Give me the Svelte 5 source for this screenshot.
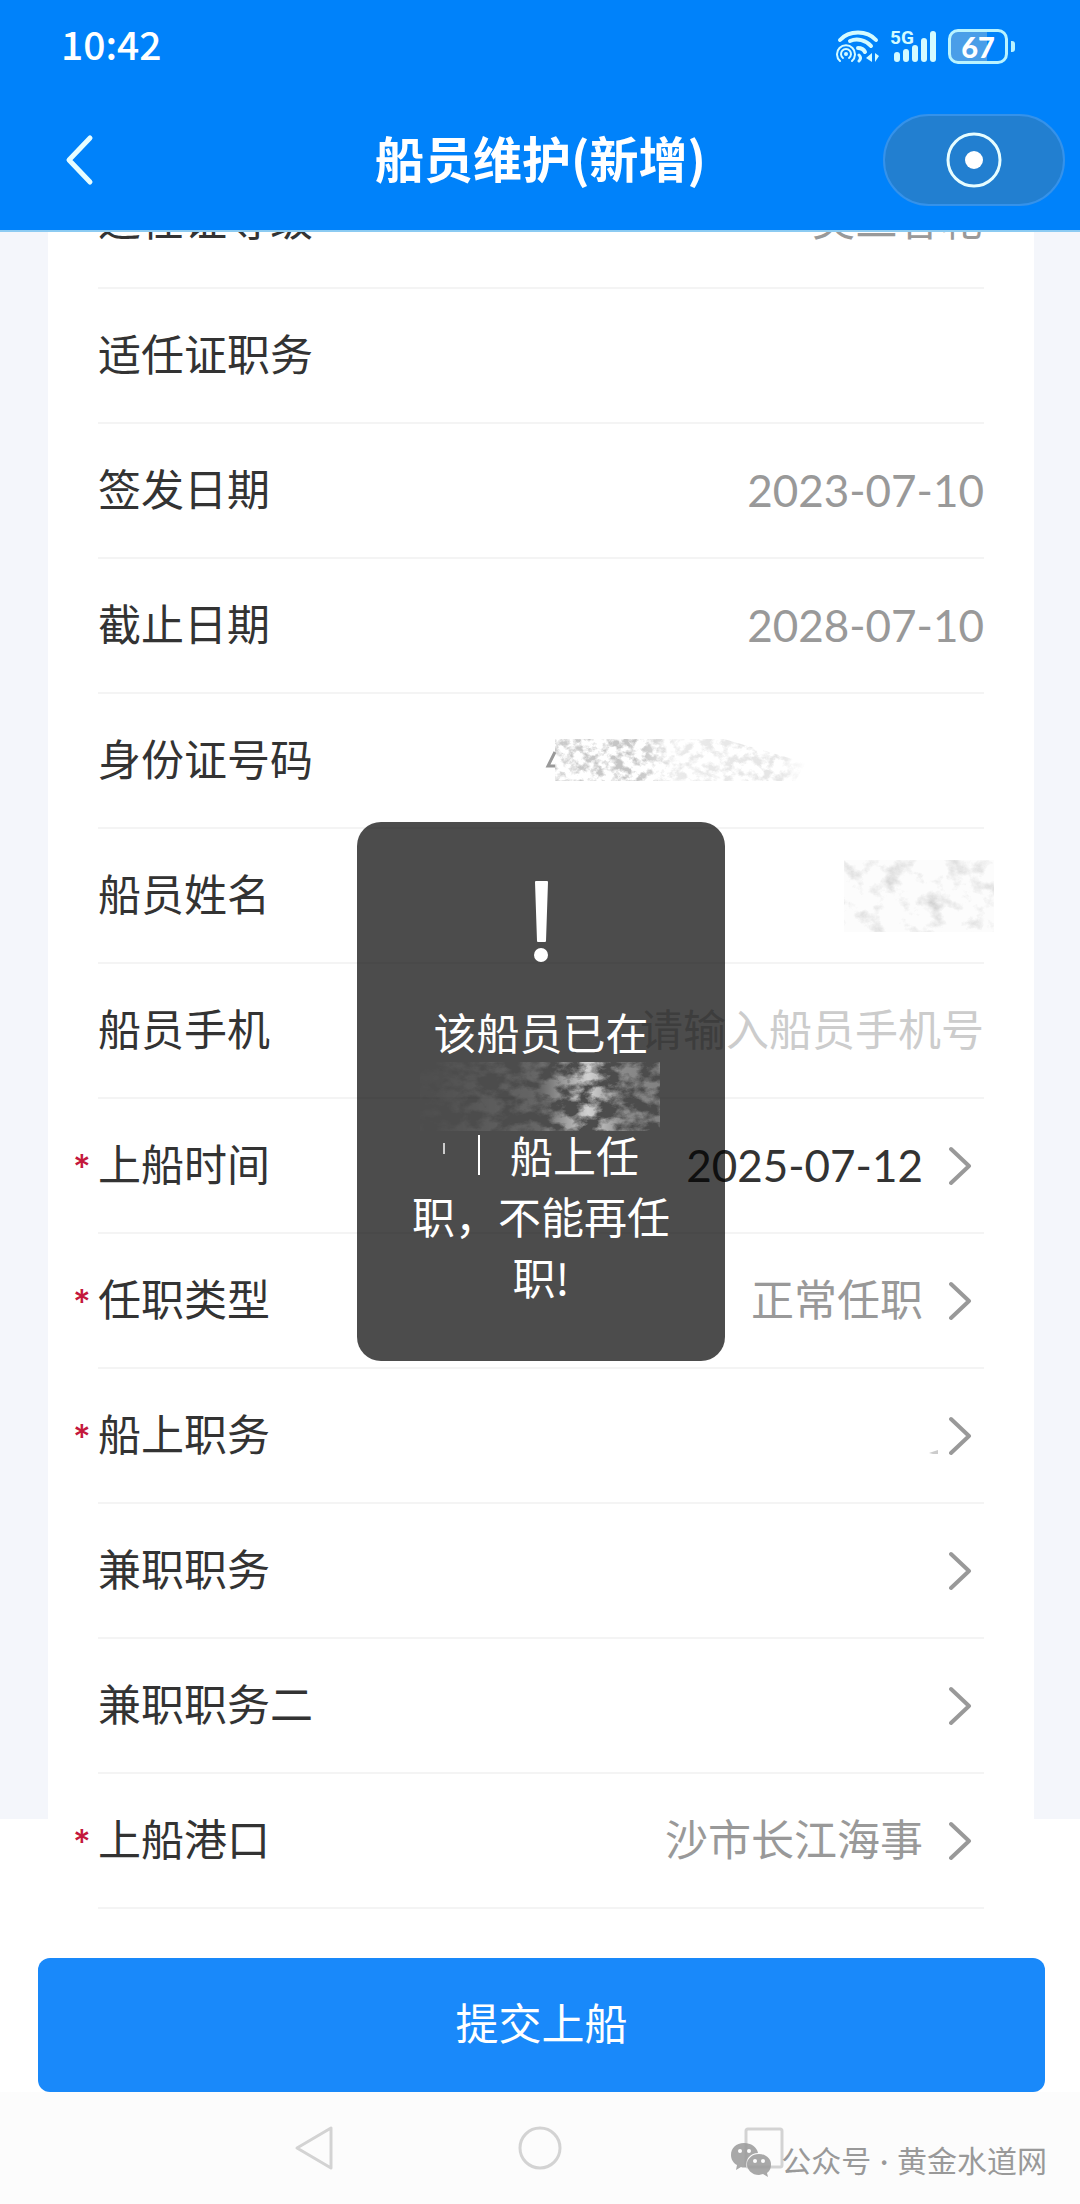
<script>
    let phone = '';

    const rows = [
        { id: 'level', label: '适任证等级', value: '类三客轮' },
        { id: 'duty', label: '适任证职务', value: '' },
        { id: 'issued', label: '签发日期', value: '2023-07-10', numeric: true },
        { id: 'expires', label: '截止日期', value: '2028-07-10', numeric: true },
        { id: 'idcard', label: '身份证号码', smudge: 'id' },
        { id: 'name', label: '船员姓名', smudge: 'name' },
        { id: 'phone', label: '船员手机', input: true },
        { id: 'boarding', label: '上船时间', value: '2025-07-12', numeric: true, dark: true, picker: true, required: true },
        { id: 'type', label: '任职类型', value: '正常任职', picker: true, required: true },
        { id: 'post', label: '船上职务', value: '', smudge: 'post', picker: true, required: true },
        { id: 'second', label: '兼职职务', value: '', picker: true },
        { id: 'third', label: '兼职职务二', value: '', picker: true },
        { id: 'port', label: '上船港口', value: '沙市长江海事', picker: true, required: true }
    ];

    const bars = [10, 13, 17, 24, 31];
</script>

<div class="page">
    <header>
        <div class="status">
            <span class="clock">10:42</span>
            <div class="indicators">
                <svg class="wifi" viewBox="0 0 44 34" width="44" height="34" fill="none" stroke="#d4fbff" stroke-linecap="round">
                    <path d="M4 11C13 1 31 1 40 11" stroke-width="4" />
                    <path d="M14 12C21 9 30 11 35 17" stroke-width="4" />
                    <path d="M22 19Q27 19 29 23" stroke-width="4" />
                    <path d="M4 32A9 9 0 1 1 16 32" stroke-width="2" />
                    <path d="M7 29A5 5 0 1 1 13 29" stroke-width="2" />
                    <circle cx="10" cy="25" r="2" fill="#d4fbff" stroke="none" />
                    <path d="M23 26Q26 29 23 32" stroke-width="3" />
                    <path d="M36 24V33L30 29ZM39 24V33L43 27Z" fill="#d4fbff" stroke="none" />
                </svg>
                <div class="signal">
                    <span class="net">5G</span>
                    <div class="bars">
                        {#each bars as h}
                            <i style="height: {h}px"></i>
                        {/each}
                    </div>
                </div>
                <div class="battery"><span>67</span></div>
            </div>
        </div>
        <nav class="titlebar">
            <button class="back" aria-label="返回">
                <svg viewBox="0 0 32 52" width="32" height="52" fill="none" stroke="#e6fdff" stroke-width="5" stroke-linecap="round" stroke-linejoin="round">
                    <path d="M28 4L7 26L28 48" />
                </svg>
            </button>
            <h1>船员维护(新增)</h1>
            <button class="capsule" aria-label="关闭">
                <svg viewBox="0 0 56 56" width="56" height="56">
                    <circle cx="28" cy="28" r="26" fill="none" stroke="#e6fdff" stroke-width="3" />
                    <circle cx="28" cy="28" r="9" fill="#fff" />
                </svg>
            </button>
        </nav>
    </header>

    <form on:submit|preventDefault>
        <div class="sheet">
            <div class="card">
                {#each rows as row}
                    <div class="row">
                        <span class="star">{row.required ? '*' : ''}</span>
                        <div class="field">
                            <label for={row.id}>{row.label}</label>
                            {#if row.smudge === 'id'}
                                <svg class="smudge-id" viewBox="0 0 440 44" width="440" height="44">
                                    <path d="M11 13L4 27H11" fill="none" stroke="#999" stroke-width="3" />
                                    <rect x="11" y="0" width="330" height="42" filter="url(#grain)" mask="url(#fade-id)" />
                                </svg>
                            {:else if row.smudge === 'name'}
                                <svg class="smudge-name" viewBox="0 0 150 72" width="150" height="72">
                                    <rect width="150" height="72" fill="#fcfcfc" />
                                    <rect width="150" height="72" filter="url(#faint)" />
                                </svg>
                            {/if}
                            {#if row.input}
                                <input id={row.id} type="tel" placeholder="请输入船员手机号" bind:value={phone}>
                            {:else if row.picker}
                                <button type="button" class="pick" class:dark={row.dark} id={row.id}>
                                    <span class="value" class:numeric={row.numeric}>{row.value}</span>
                                    {#if row.smudge === 'post'}
                                        <svg class="speck" viewBox="0 0 12 40" width="12" height="40">
                                            <path d="M0 37L9 34V38H4Z" fill="#ccc" />
                                        </svg>
                                    {/if}
                                    <svg viewBox="0 0 24 40" width="24" height="40" fill="none" stroke="#999" stroke-width="4" stroke-linecap="round" stroke-linejoin="round">
                                        <path d="M2 3L20 20L2 37" />
                                    </svg>
                                </button>
                            {:else if !row.smudge}
                                <output id={row.id} class="value" class:numeric={row.numeric}>{row.value}</output>
                            {/if}
                        </div>
                    </div>
                {/each}
            </div>
        </div>
        <div class="submit">
            <button type="submit">提交上船</button>
        </div>
    </form>

    <footer>
        <button aria-label="后退">
            <svg viewBox="0 0 44 48" width="44" height="48" fill="none" stroke="#d3d3d3" stroke-width="3" stroke-linejoin="round">
                <path d="M37 4V44L3 24Z" />
            </svg>
        </button>
        <button aria-label="主页">
            <svg viewBox="0 0 44 48" width="44" height="48" fill="none" stroke="#d3d3d3" stroke-width="3">
                <circle cx="22" cy="24" r="20" />
            </svg>
        </button>
        <button aria-label="最近">
            <svg viewBox="0 0 44 48" width="44" height="48" fill="none" stroke="#d3d3d3" stroke-width="3">
                <rect x="4" y="5" width="36" height="38" rx="2" />
            </svg>
        </button>
        <div class="account">
            <svg viewBox="0 0 42 36" width="42" height="36">
                <path fill="#999" fill-opacity="0.85" d="M14 1C6 1 1 6 1 13C1 17 3 21 7 23L6 28L11 25Q14 26 16 25C15 17 21 11 28 11C27 5 21 1 14 1Z" />
                <path fill="#999" fill-opacity="0.85" d="M29 12C22 12 17 17 17 22C17 28 22 33 29 33L33 32L38 35L37 31C40 29 41 26 41 22C41 17 36 12 29 12Z" />
                <g fill="#fcfcfc">
                    <circle cx="10" cy="9" r="2" />
                    <circle cx="19" cy="9" r="2" />
                    <circle cx="25" cy="19" r="2" />
                    <circle cx="33" cy="19" r="2" />
                </g>
            </svg>
            <span>公众号</span>
            <span>·</span>
            <span>黄金水道网</span>
        </div>
    </footer>

    <div class="toast" role="alert">
        <svg class="mark" viewBox="0 0 20 84" width="20" height="84" fill="#fff">
            <path d="M4 2Q4 1 5 1H16Q17 1 17 2L15 61Q15 62 14 62H7Q6 62 6 61Z" />
            <circle cx="10" cy="75" r="7" />
        </svg>
        <p>该船员已在</p>
        <svg class="smudge-ship" viewBox="0 0 240 70" width="240" height="70">
            <rect width="240" height="69" fill="#fff" filter="url(#glow)" mask="url(#fade-ship)" />
        </svg>
        <p class="ship"><i class="tick"></i><i class="bar"></i><span>船上任</span></p>
        <p>职，不能再任<br>职!</p>
    </div>

    <svg class="defs" width="0" height="0" aria-hidden="true">
        <defs>
            <filter id="grain" x="0" y="0" width="1" height="1">
                <feTurbulence type="fractalNoise" baseFrequency="0.1 0.12" numOctaves="6" seed="7" />
                <feColorMatrix values="0 0 0 0 0.4  0 0 0 0 0.4  0 0 0 0 0.4  4 0 0 0 -1.7" />
                <feComposite in2="SourceGraphic" operator="in" />
            </filter>
            <filter id="faint" x="0" y="0" width="1" height="1">
                <feTurbulence type="fractalNoise" baseFrequency="0.05 0.06" numOctaves="6" seed="12" />
                <feColorMatrix values="0 0 0 0 0.5  0 0 0 0 0.5  0 0 0 0 0.5  1.5 0 0 0 -0.75" />
                <feComposite in2="SourceGraphic" operator="in" />
            </filter>
            <filter id="glow" x="0" y="0" width="1" height="1">
                <feTurbulence type="fractalNoise" baseFrequency="0.05 0.08" numOctaves="7" seed="9" />
                <feColorMatrix values="0 0 0 0 1  0 0 0 0 1  0 0 0 0 1  3.5 0 0 0 -1.3" />
                <feComposite in2="SourceGraphic" operator="in" />
            </filter>
            <linearGradient id="g-id">
                <stop offset="0" stop-color="#fff" stop-opacity="0.6" />
                <stop offset="0.35" stop-color="#fff" stop-opacity="0.7" />
                <stop offset="0.5" stop-color="#fff" stop-opacity="0.25" />
                <stop offset="0.9" stop-color="#fff" stop-opacity="0.3" />
                <stop offset="1" stop-color="#fff" stop-opacity="0" />
            </linearGradient>
            <linearGradient id="g-ship">
                <stop offset="0.05" stop-color="#fff" stop-opacity="0.02" />
                <stop offset="0.5" stop-color="#fff" stop-opacity="0.15" />
                <stop offset="0.7" stop-color="#fff" stop-opacity="0.75" />
                <stop offset="0.85" stop-color="#fff" stop-opacity="0.35" />
                <stop offset="1" stop-color="#fff" stop-opacity="0.3" />
            </linearGradient>
            <mask id="fade-id"><path d="M0 0H180L262 24L250 44H0Z" fill="url(#g-id)" /></mask>
            <mask id="fade-ship"><rect width="240" height="70" fill="url(#g-ship)" /></mask>
        </defs>
    </svg>
</div>

<style>
    :global(body) {
        margin: 0;
        background: #fff;
    }
    .page {
        position: relative;
        display: flex;
        flex-direction: column;
        min-height: 100vh;
        font-family: "Noto Sans CJK SC", sans-serif;
        font-size: 43px;
        line-height: 61px;
        color: #333;
    }
    button, input {
        font: inherit;
        color: inherit;
        background: none;
        border: 0;
        padding: 0;
        margin: 0;
    }
    svg {
        display: block;
        flex: none;
    }
    header {
        background: #0082fa;
        border-bottom: 2px solid #8ccbf2;
        color: #fff;
    }
    .status {
        display: flex;
        align-items: center;
        justify-content: space-between;
        height: 92px;
        padding: 0 72px 0 61px;
    }
    .clock {
        padding-bottom: 5px;
        font-size: 39px;
        font-weight: 500;
    }
    .indicators {
        display: flex;
        align-items: center;
        gap: 10px;
    }
    .signal {
        position: relative;
        width: 48px;
        height: 34px;
    }
    .net {
        position: absolute;
        left: 0;
        top: 0;
        font-family: Roboto, sans-serif;
        font-size: 19px;
        line-height: 17px;
        font-weight: 700;
        color: #d4fbff;
    }
    .bars {
        display: flex;
        align-items: flex-end;
        justify-content: flex-end;
        gap: 3px;
        height: 33px;
        padding-right: 2px;
    }
    .bars i {
        width: 6px;
        border-radius: 3px;
        background: #d4fbff;
    }
    .battery {
        position: relative;
        width: 54px;
        height: 29px;
        border: 3px solid #b9f3ff;
        border-radius: 10px;
        background: linear-gradient(to right, #4a9ee8 66%, transparent 0);
        font-family: Lato, sans-serif;
        font-size: 29px;
        line-height: 29px;
        font-weight: 900;
        text-align: center;
    }
    .battery::after {
        content: '';
        position: absolute;
        right: -10px;
        top: 9px;
        width: 4px;
        height: 11px;
        border-radius: 0 3px 3px 0;
        background: #b9f3ff;
    }
    .titlebar {
        display: grid;
        grid-template-columns: 1fr auto 1fr;
        align-items: center;
        height: 136px;
        padding: 0 15px 2px 62px;
    }
    h1 {
        margin: 0 0 0 -46px;
        padding-bottom: 8px;
        font-size: 49px;
        font-weight: 700;
    }
    .back {
        justify-self: start;
    }
    .capsule {
        display: flex;
        align-items: center;
        justify-content: center;
        justify-self: end;
        width: 182px;
        height: 92px;
        border: 2px solid #3592ea;
        border-radius: 46px;
        background: #227fd0;
    }
    .sheet {
        overflow: hidden;
        padding: 0 46px 0 48px;
        background: linear-gradient(to bottom, #f4f6fb calc(100% - 90px), #fff 0);
    }
    /* the list is scrolled, its first row is half under the header */
    .card {
        margin-top: -78px;
        padding: 0 50px 0 25px;
        background: #fff;
    }
    .row {
        display: grid;
        grid-template-columns: 25px 1fr;
        height: 135px;
    }
    .star {
        align-self: center;
        font-family: Inter, sans-serif;
        font-size: 34px;
        font-weight: 500;
        color: #c4183c;
    }
    .field {
        display: flex;
        align-items: center;
        justify-content: space-between;
        border-bottom: 2px solid #f4f4f4;
    }
    label, .value, input {
        padding-bottom: 6px;
    }
    label {
        flex: none;
    }
    output, .pick {
        color: #999;
    }
    .pick {
        display: flex;
        align-items: center;
        justify-content: flex-end;
        flex: 1;
        gap: 26px;
        padding-right: 11px;
    }
    .pick.dark {
        color: #333;
    }
    .speck {
        margin-right: -18px;
    }
    .value.numeric {
        padding-bottom: 0;
        font-family: Lato, sans-serif;
        font-size: 44px;
    }
    .smudge-name {
        margin-right: -10px;
    }
    input {
        flex: 1;
        min-width: 0;
        text-align: right;
        outline: 0;
    }
    input::placeholder {
        color: #ccc;
        opacity: 1;
    }
    .submit {
        padding: 49px 35px 0 38px;
    }
    .submit button {
        display: block;
        width: 100%;
        height: 134px;
        padding-bottom: 8px;
        border-radius: 12px;
        background: #1989fa;
        color: #fff;
    }
    footer {
        position: relative;
        flex: 1;
        display: flex;
        justify-content: center;
        gap: 180px;
        padding-top: 32px;
        background: #fcfcfc;
    }
    footer button {
        height: 48px;
    }
    .account {
        position: absolute;
        right: 33px;
        bottom: 22px;
        display: flex;
        align-items: center;
        gap: 9px;
        font-family: Lato, "Noto Sans CJK SC", sans-serif;
        font-size: 30px;
        line-height: 44px;
        color: #999;
    }
    .toast {
        position: absolute;
        top: 822px;
        left: 50%;
        width: 368px;
        box-sizing: border-box;
        margin-left: -183px;
        padding: 58px 0 54px;
        border-radius: 24px;
        background: rgba(0, 0, 0, 0.7);
        color: #fff;
        text-align: center;
    }
    .toast p {
        margin: 0;
    }
    .mark {
        margin: 0 auto 37px;
    }
    .smudge-ship {
        margin: 0 0 -8px 63px;
    }
    .toast .ship {
        display: flex;
        align-items: center;
        justify-content: center;
    }
    .tick {
        width: 2px;
        height: 11px;
        margin: 0 33px 12px 0;
        background: #ccc;
    }
    .bar {
        width: 2px;
        height: 40px;
        margin-right: 30px;
        background: #fff;
    }
    .defs {
        position: absolute;
    }
</style>
